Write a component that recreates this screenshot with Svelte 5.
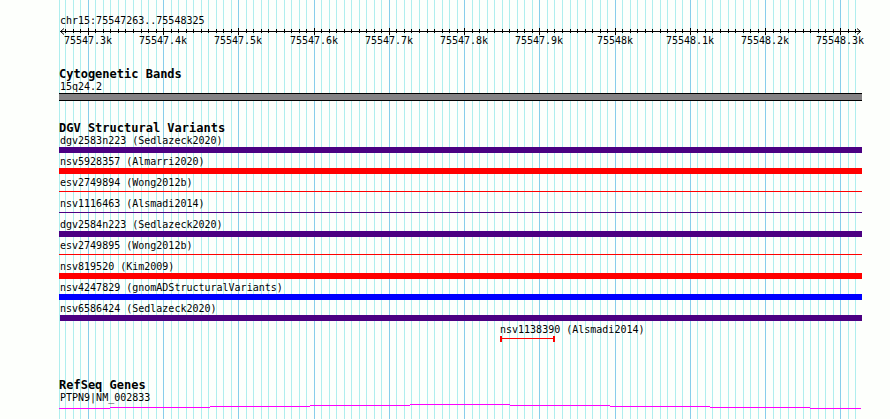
<script lang="ts">
    interface Variant {
        name: string;
        study: string;
        color: "indigo" | "red" | "blue";
        thin?: boolean;
        start?: number; // only set when the variant starts inside the view
        end?: number;
    }

    const REGION = {chrom: "chr15", start: 75547263, end: 75548325};
    const MAJOR = 100;
    const MINOR = 10;

    const variants: Variant[] = [
        {name: "dgv2583n223", study: "Sedlazeck2020", color: "indigo"},
        {name: "nsv5928357", study: "Almarri2020", color: "red"},
        {name: "esv2749894", study: "Wong2012b", color: "red", thin: true},
        {name: "nsv1116463", study: "Alsmadi2014", color: "indigo", thin: true},
        {name: "dgv2584n223", study: "Sedlazeck2020", color: "indigo"},
        {name: "esv2749895", study: "Wong2012b", color: "red", thin: true},
        {name: "nsv819520", study: "Kim2009", color: "red"},
        {name: "nsv4247829", study: "gnomADStructuralVariants", color: "blue"},
        {name: "nsv6586424", study: "Sedlazeck2020", color: "indigo", start: 75547263},
        {name: "nsv1138390", study: "Alsmadi2014", color: "red", start: 75547848, end: 75547920},
    ];

    // Intron line rises to the middle and falls again, one pixel per step
    const INTRON_STEPS = [4, 3, 2, 1, 0, 1, 2, 3, 4];

    let width = $state(803);

    const inner = $derived(width - 3);
    const scale = $derived(inner / (REGION.end - REGION.start + 1));
    const ticks = $derived(buildTicks(scale));
    const intron = $derived(
        INTRON_STEPS.map((y, i) => {
            const from = i === 0 ? 0 : Math.round(1 + inner * (i * 2 - 1) / 16);
            const to = i === INTRON_STEPS.length - 1 ? width - 1 : Math.round(1 + inner * (i * 2 + 1) / 16);
            return {y, from, length: to - from};
        })
    );

    function toX(bp: number, pxPerBase: number) {
        return Math.round(1 + (bp - REGION.start) * pxPerBase);
    }

    function buildTicks(pxPerBase: number) {
        const list = [];
        const first = Math.ceil(REGION.start / MINOR) * MINOR;
        for (let bp = first; bp <= REGION.end; bp += MINOR) {
            list.push({bp, x: toX(bp, pxPerBase), major: bp % MAJOR === 0});
        }
        return list;
    }
</script>

<main>
    <div class="panel" bind:clientWidth={width}>
        <svg class="grid" aria-hidden="true">
            <rect class="minor" x="0" y="0" width="1" height="100%" />
            {#each ticks as tick (tick.bp)}
                <rect class={tick.major ? "major" : "minor"} x={tick.x} y="0" width="1" height="100%" />
            {/each}
        </svg>

        <header>
            <div class="label">{REGION.chrom}:{REGION.start}..{REGION.end}</div>
            <svg class="ruler">
                <rect x="1" y="4" width={width - 2} height="1" />
                <path d="M5 1.5 L1.5 4.5 L5 7.5" />
                <path d="M{width - 5} 1.5 L{width - 1.5} 4.5 L{width - 5} 7.5" />
                {#each ticks as tick (tick.bp)}
                    <rect x={tick.x} y={tick.major ? 1 : 2} width="1" height={tick.major ? 7 : 4} />
                    {#if tick.major}
                        <text x={tick.x} y="17" text-anchor="middle">{tick.bp / 1000}k</text>
                    {/if}
                {/each}
            </svg>
        </header>

        <section>
            <h2>Cytogenetic Bands</h2>
            <div class="label">15q24.2</div>
            <div class="band"></div>
        </section>

        <section class="variants">
            <h2>DGV Structural Variants</h2>
            <ul>
                {#each variants as v (v.name)}
                    {@const left = v.start ? toX(v.start, scale) : 0}
                    <li class:inside={v.start} style:margin-left="{left}px">
                        <div class="label">{v.name} ({v.study})</div>
                        <div
                            class="bar {v.color}"
                            class:thin={v.thin}
                            class:span={v.end}
                            style:width={v.end ? `${toX(v.end, scale) - left + 1}px` : null}
                        ></div>
                    </li>
                {/each}
            </ul>
        </section>

        <section class="genes">
            <h2>RefSeq Genes</h2>
            <div class="label">PTPN9|NM_002833</div>
            <svg class="intron" aria-hidden="true">
                {#each intron as step (step.from)}
                    <rect x={step.from} y={step.y} width={step.length} height="1" />
                {/each}
            </svg>
        </section>
    </div>
</main>

<style>
:global(body) {
    margin: 0;
    background: #fdfffc;
}

main {
    padding: 0 28px 0 59px;
    color: #000;
    font-family: "DejaVu Sans Mono", "Liberation Mono", monospace;
    font-size: 10px;
    line-height: 12px;
}

.panel {
    position: relative;
    box-sizing: border-box;
    min-height: 100vh;
    padding: 15px 0 10px;
}

.grid {
    position: absolute;
    inset: 0;
    z-index: -1;
    width: 100%;
    height: 100%;
}

.minor {
    fill: #afeeee;
}

.major {
    fill: #87ceeb;
}

.label {
    padding-left: 1px;
    white-space: nowrap;
}

.inside .label {
    padding-left: 0;
}

.ruler {
    display: block;
    width: 100%;
    height: 20px;
    overflow: visible;
}

.ruler path {
    fill: none;
    stroke: #000;
}

section {
    margin-top: 21px;
}

h2 {
    margin: 0;
    font-size: 12px;
    line-height: 13px;
    white-space: nowrap;
}

.band {
    height: 6px;
    border: solid #000;
    border-width: 1px 0;
    background: #848284;
}

ul {
    margin: 0;
    padding: 0;
    list-style: none;
}

li {
    padding-bottom: 3px;
}

.bar {
    height: 6px;
    background: currentColor;
}

.bar.thin {
    height: 1px;
    margin: 2px 0 3px;
}

.bar.span {
    box-sizing: border-box;
    border: solid currentColor;
    border-width: 0 2px;
    background: linear-gradient(currentColor, currentColor) 0 2px / 100% 1px no-repeat;
}

.indigo {
    color: #4b0082;
}

.red {
    color: #f00;
}

.blue {
    color: #00f;
}

.genes {
    margin-top: 34px;
}

.intron {
    display: block;
    width: 100%;
    height: 5px;
    fill: #f0f;
}
</style>
